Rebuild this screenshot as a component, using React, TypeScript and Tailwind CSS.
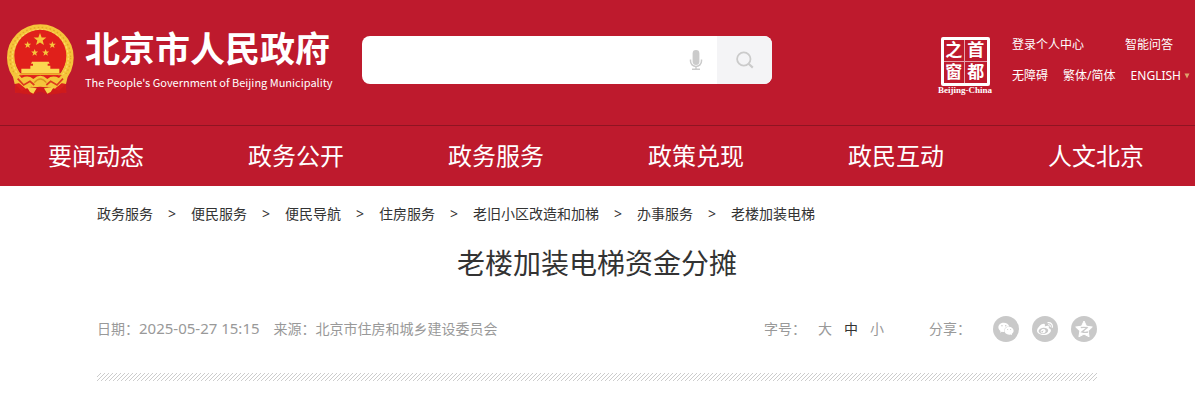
import React from "react";
import { FaWeixin, FaWeibo } from "react-icons/fa";

const navItems = ["要闻动态", "政务公开", "政务服务", "政策兑现", "政民互动", "人文北京"];
const crumbs = ["政务服务", "便民服务", "便民导航", "住房服务", "老旧小区改造和加梯", "办事服务", "老楼加装电梯"];

function Star({ x, y, r }: { x: number; y: number; r: number }) {
  const points = Array.from({ length: 10 }, (_, i) => {
    const radius = i % 2 === 0 ? r : r * 0.42;
    const angle = (Math.PI / 5) * i - Math.PI / 2;
    return `${x + radius * Math.cos(angle)},${y + radius * Math.sin(angle)}`;
  }).join(" ");
  return <polygon points={points} fill="#f6c63c" />;
}

function Emblem() {
  return (
    <svg viewBox="22 26 201 213" className="h-[71px] w-[67px] shrink-0" aria-hidden="true">
      <path d="M48 182 L46 232 L76 228 L90 237 L122 228 L154 237 L168 228 L200 232 L196 182 Z" fill="#d9201c" />
      <circle cx="122" cy="127" r="88" fill="none" stroke="#f5c43a" strokeWidth="24" />
      <circle cx="122" cy="127" r="91" fill="none" stroke="#e3a827" strokeWidth="4" strokeDasharray="5 7" />
      <circle cx="122" cy="127" r="84" fill="none" stroke="#fbdc62" strokeWidth="4" strokeDasharray="7 5" />
      <circle cx="122" cy="121" r="78" fill="#e0201b" />
      <Star x={121} y={73} r={20} />
      <Star x={84} y={89} r={11} />
      <Star x={158} y={89} r={11} />
      <Star x={105} y={112} r={11} />
      <Star x={138} y={112} r={11} />
      <path d="M97 139 H147 L150 145 H94 Z M100 145 H144 V152 H100 Z M92 151 H152 V160 H92 Z M65 160 H179 V174 H65 Z" fill="#fbd650" />
      <path d="M61 174 H183 V180 H61 Z" fill="#eeb02c" />
      <path d="M56 180 H188 L184 198 L122 204 L60 198 Z" fill="#e0201b" />
      <path d="M38 176 Q55 172 66 188 Q86 178 101 191 Q122 172 143 191 Q158 178 178 188 Q189 172 206 176 L199 206 L184 203 L166 220 L143 211 L122 220 L101 211 L78 220 L60 203 L45 206 Z" fill="#f5c53c" />
      <path d="M54 190 L72 209 L91 198 L104 209 M190 190 L172 209 L153 198 L140 209" fill="none" stroke="#dd3a1e" strokeWidth="5" />
      <path d="M104 202 Q122 180 140 202" fill="none" stroke="#d9921e" strokeWidth="4" />
      <path d="M48 208 L66 226 L90 217 L122 214 L154 217 L178 226 L196 208 L200 230 L173 235 L145 238 L122 228 L99 238 L71 235 L46 230 Z" fill="#cf1b1b" />
      <path d="M82 216 L111 219 L101 235 L91 230 Z M162 216 L133 219 L143 235 L153 230 Z" fill="#f7d24b" />
    </svg>
  );
}

function MicIcon() {
  return (
    <svg viewBox="0 0 14 22" className="h-[22px] w-[14px] shrink-0" aria-hidden="true">
      <rect x="3.6" y="1" width="6.8" height="15" rx="3.4" fill="#cbcbcb" />
      <path d="M1.5 10.5 V12 A5.5 5.5 0 0 0 12.5 12 V10.5 M7 17.5 V20 M3 20.2 H11" fill="none" stroke="#cbcbcb" strokeWidth="1.5" />
    </svg>
  );
}

function SearchIcon() {
  return (
    <svg viewBox="0 0 18 18" className="h-[18px] w-[18px]" aria-hidden="true">
      <circle cx="7.8" cy="8" r="6.7" fill="none" stroke="#cbcbcb" strokeWidth="1.8" />
      <path d="M12.6 12.8 L16.8 16.6" stroke="#cbcbcb" strokeWidth="2.2" />
    </svg>
  );
}

function QzoneIcon() {
  return (
    <svg viewBox="0 0 26 26" className="size-[26px]" aria-hidden="true">
      <path
        d="M13 5 L15.5 10.2 L21.3 11 L17.1 15 L18.1 20.8 L13 18.1 L7.9 20.8 L8.9 15 L4.7 11 L10.5 10.2 Z"
        fill="#fff"
        stroke="#fff"
        strokeLinejoin="round"
      />
      <path d="M9.8 11.7 Q13 10.9 16 11.7 L10.8 15.9 Q14 16.8 17 16" fill="none" stroke="#c9c9c9" strokeWidth="1.3" />
    </svg>
  );
}

function CapitalWindow() {
  return (
    <a href="#capital-window" aria-label="首都之窗 Beijing-China" className="flex w-[56px] flex-col items-center">
      <span className="grid size-[49px] grid-cols-2 grid-rows-2 rounded-xs border-3 border-white text-center text-[17px]/[20px] font-bold">
        <span className="border-r border-b border-white/60">之</span>
        <span className="border-b border-white/60">首</span>
        <span className="border-r border-white/60">窗</span>
        <span>都</span>
      </span>
      <span className="font-['Liberation_Serif',serif] text-[9px]/[9px] font-bold whitespace-nowrap">Beijing-China</span>
    </a>
  );
}

export default function App() {
  return (
    <div className="overflow-x-hidden bg-white font-['Noto_Sans','Noto_Sans_CJK_SC',sans-serif] text-[#333]">
      <header className="bg-[#be1a2d] text-white">
        <div className="flex h-[125px] items-start pl-[7px]">
          <a href="#home" className="flex w-[355px] shrink-0 items-start gap-[11px] pt-[24px]">
            <Emblem />
            <span className="flex flex-col whitespace-nowrap">
              <span className="text-[35px]/[50px] font-bold">北京市人民政府</span>
              <span className="font-['Noto_Sans_CJK_SC',sans-serif] text-[11px]/[16px]">The People's Government of Beijing Municipality</span>
            </span>
          </a>
          <form role="search" onSubmit={(e) => e.preventDefault()} className="mt-[36px] flex h-[48px] w-[410px] overflow-hidden rounded-lg bg-white">
            <input type="text" aria-label="搜索" className="min-w-0 flex-1 px-4 text-base text-[#333] outline-none" />
            <button type="button" aria-label="语音搜索" className="flex w-[42px] items-center justify-center">
              <MicIcon />
            </button>
            <button type="submit" aria-label="搜索" className="flex w-[55px] items-center justify-center bg-[#f4f4f6]">
              <SearchIcon />
            </button>
          </form>
          <div className="ml-auto flex shrink-0 gap-[19px] pt-[37px] pr-[5px]">
            <CapitalWindow />
            <div className="flex w-[178px] flex-col gap-[15px] text-[12px]/[16px] whitespace-nowrap">
              <div className="flex justify-between pr-[17px]">
                <a href="#login">登录个人中心</a>
                <a href="#qa">智能问答</a>
              </div>
              <div className="flex justify-between">
                <a href="#accessible">无障碍</a>
                <a href="#traditional">繁体/简体</a>
                <a href="#english" className="flex items-center gap-[3px]">
                  ENGLISH
                  <svg viewBox="0 0 6 6" className="size-[6px]" aria-hidden="true">
                    <path d="M0.5 0.5 H5.5 L3 5.5 Z" fill="#dda46c" />
                  </svg>
                </a>
              </div>
            </div>
          </div>
        </div>
        <nav className="border-t border-[#8f1422]">
          <ul className="-mr-[1px] -ml-[4px] grid grid-cols-6 text-center text-[24px]/[60px]">
            {navItems.map((item) => (
              <li key={item}>
                <a href="#nav">{item}</a>
              </li>
            ))}
          </ul>
        </nav>
      </header>

      <main className="mx-auto max-w-[1001px] pr-px">
        <nav aria-label="面包屑" className="pt-[18px]">
          <ol className="flex text-[14px]/[20px] whitespace-nowrap">
            {crumbs.map((crumb, i) => (
              <li key={crumb} className="flex">
                {i > 0 && <span className="w-[38px] text-center">&gt;</span>}
                <a href="#crumb">{crumb}</a>
              </li>
            ))}
          </ol>
        </nav>
        <h1 className="mt-[19px] text-center text-[28px]/[40px]">老楼加装电梯资金分摊</h1>
        <div className="mt-[31px] flex h-[30px] items-center text-[14px]/[20px] whitespace-nowrap text-[#999]">
          <div className="flex items-baseline">
            <p>
              日期：<time className="text-[15px] leading-none">2025-05-27 15:15</time>
            </p>
            <p className="ml-[14px]">来源：北京市住房和城乡建设委员会</p>
          </div>
          <div className="ml-auto flex items-center">
            <span>字号：</span>
            <div className="ml-[12px] flex gap-[12px]">
              <button type="button">大</button>
              <button type="button" className="text-[#333]">中</button>
              <button type="button">小</button>
            </div>
          </div>
          <div className="ml-[45px] flex items-center">
            <span>分享：</span>
            <div className="ml-[22px] flex gap-[13px]">
              <button type="button" aria-label="微信" className="flex size-[26px] items-center justify-center rounded-full bg-[#c9c9c9] text-[16px] text-white">
                <FaWeixin />
              </button>
              <button type="button" aria-label="微博" className="flex size-[26px] items-center justify-center rounded-full bg-[#c9c9c9] text-[16px] text-white">
                <FaWeibo />
              </button>
              <button type="button" aria-label="QQ空间" className="flex size-[26px] items-center justify-center rounded-full bg-[#c9c9c9]">
                <QzoneIcon />
              </button>
            </div>
          </div>
        </div>
        <div className="mt-[29px] h-[8px] bg-[linear-gradient(135deg,#fff_37.5%,#ccc_37.5%,#ccc_50%,#fff_50%,#fff_87.5%,#ccc_87.5%)] bg-[length:4px_4px]" />
      </main>
    </div>
  );
}
